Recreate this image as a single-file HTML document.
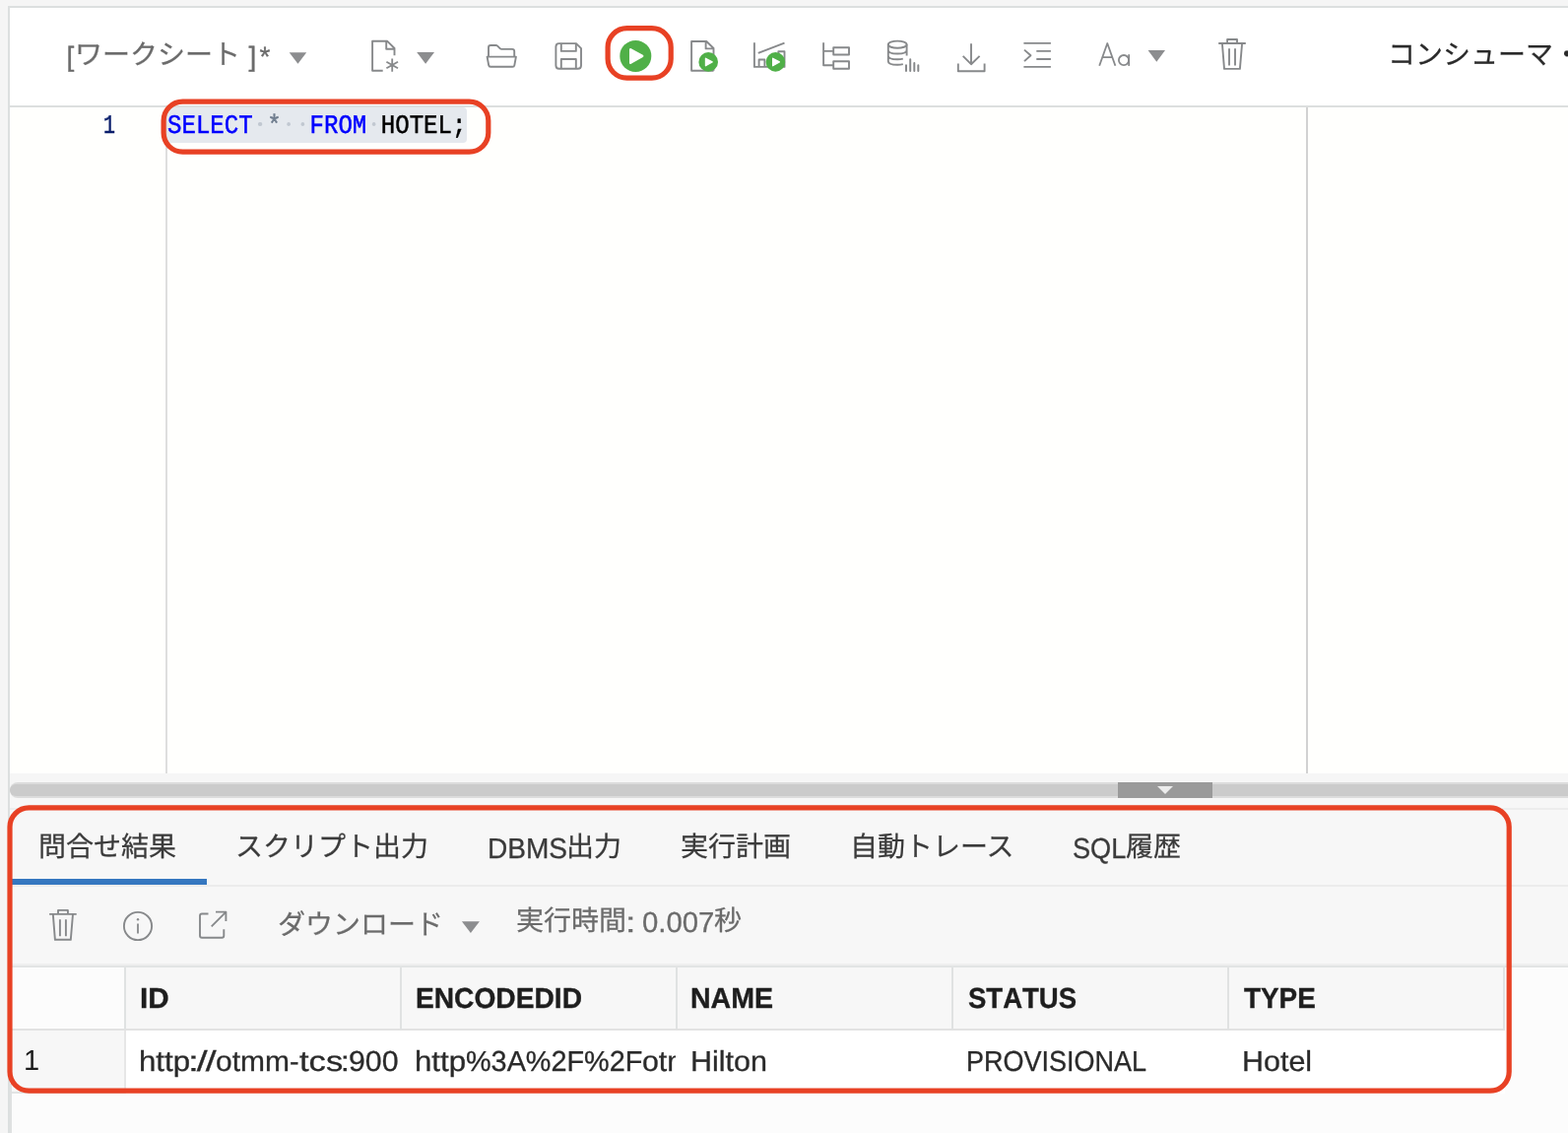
<!DOCTYPE html>
<html lang="ja"><head><meta charset="utf-8"><title>SQL Worksheet</title><style>
html,body{margin:0;padding:0;overflow:hidden}
body{text-rendering:geometricPrecision;width:1592px;height:1150px;position:relative;overflow:hidden;background:#f5f5f5;font-family:"Liberation Sans",sans-serif}
.b{position:absolute;box-sizing:border-box}
.t{position:absolute;white-space:pre;display:block}
.j{font:normal 28px/28px "Liberation Sans","Noto Sans CJK JP",sans-serif;-webkit-text-stroke:0.25px}
svg.i{position:absolute;overflow:visible}
#app{position:absolute;left:0;top:0;width:1592px;height:1150px;overflow:hidden;will-change:transform}
</style></head><body>
<div id="app">
<div class="b" style="left:10px;top:8px;width:1582px;height:99px;background:#ffffff;"></div>
<div class="b" style="left:8px;top:6px;width:1584px;height:2px;background:#dcdfdf;"></div>
<div class="b" style="left:8px;top:6px;width:2px;height:1144px;background:#dcdfdf;"></div>
<div class="b" style="left:10px;top:107px;width:1582px;height:2px;background:#dcdfdf;"></div>
<div class="b" style="left:10px;top:109px;width:1582px;height:676px;background:#fffffd;"></div>
<div class="b" style="left:168px;top:109px;width:2px;height:676px;background:#dedede;"></div>
<div class="b" style="left:1326px;top:109px;width:2px;height:676px;background:#d2d2d2;"></div>
<div class="b" style="left:10px;top:785px;width:1582px;height:25px;background:#f6f6f6;"></div>
<div class="b" style="left:10px;top:794px;width:1582px;height:16px;background:#dcdcdc;border-radius:8px 0 0 8px"></div>
<div class="b" style="left:10px;top:796px;width:1582px;height:12px;background:#cbcbcb;border-radius:6px 0 0 6px"></div>
<div class="b" style="left:1135px;top:794px;width:96px;height:16px;background:#9a9a9a;"></div>
<svg class="i" style="left:1175px;top:798px" width="16" height="8" viewBox="0 0 16 8"><path d="M0 0H16L8 8Z" fill="#ececec"/></svg>
<div class="b" style="left:10px;top:810px;width:1582px;height:172px;background:#f7f7f7;"></div>
<div class="b" style="left:10px;top:820px;width:1582px;height:2px;background:#ededed;"></div>
<div class="b" style="left:10px;top:898px;width:1582px;height:2px;background:#ececec;"></div>
<div class="b" style="left:10px;top:978px;width:1582px;height:2px;background:#efefef;"></div>
<div class="b" style="left:10px;top:980px;width:1582px;height:2px;background:#e2e4e4;"></div>
<div class="b" style="left:10px;top:982px;width:1582px;height:168px;background:#fcfcfc;"></div>
<div class="b" style="left:12px;top:982px;width:115px;height:63px;background:#fcfcfc;"></div>
<div class="b" style="left:127px;top:982px;width:1401px;height:63px;background:#f7f7f7;"></div>
<div class="b" style="left:12px;top:1046px;width:115px;height:62px;background:#f7f7f7;"></div>
<div class="b" style="left:127px;top:1046px;width:1401px;height:64px;background:#ffffff;"></div>
<div class="b" style="left:12px;top:1044px;width:1516px;height:2px;background:#e2e2e2;"></div>
<div class="b" style="left:126px;top:982px;width:2px;height:63px;background:#e0e2e2;"></div>
<div class="b" style="left:406px;top:982px;width:2px;height:63px;background:#e0e2e2;"></div>
<div class="b" style="left:686px;top:982px;width:2px;height:63px;background:#e0e2e2;"></div>
<div class="b" style="left:966px;top:982px;width:2px;height:63px;background:#e0e2e2;"></div>
<div class="b" style="left:1246px;top:982px;width:2px;height:63px;background:#e0e2e2;"></div>
<div class="b" style="left:1526px;top:982px;width:2px;height:63px;background:#e0e2e2;"></div>
<div class="b" style="left:126px;top:1046px;width:2px;height:64px;background:#e6e6e6;"></div>
<div class="b" style="left:12px;top:1108px;width:115px;height:2px;background:#e2e4e4;"></div>
<div class="b" style="left:10px;top:1100px;width:2px;height:50px;background:#dfe1e1;"></div>
<div class="b" style="left:12px;top:892px;width:198px;height:6px;background:#3577c0;"></div>
<span class="t" style="left:67.60px;top:41px;font:normal 28px/33.60px 'Liberation Sans',sans-serif;color:#6b6b6b;letter-spacing:0px;-webkit-text-stroke:0.35px;">[</span>
<span class="t j" style="left:76px;top:42px;color:#6b6b6b">ワークシート</span>
<span class="t" style="left:252.60px;top:41px;font:normal 28px/33.60px 'Liberation Sans',sans-serif;color:#6b6b6b;letter-spacing:0px;-webkit-text-stroke:0.35px;">]</span>
<span class="t" style="left:263.40px;top:41px;font:normal 28px/33.60px 'Liberation Sans',sans-serif;color:#6b6b6b;letter-spacing:0px;-webkit-text-stroke:0.35px;">*</span>
<span class="t j" style="left:1409px;top:42px;color:#2a2a2a">コンシューマ</span>
<span class="t j" style="left:1577px;top:42px;color:#2a2a2a">・</span>
<span class="t" style="left:105.20px;top:113px;font:normal 27px/32.40px 'Liberation Mono',monospace;color:#0b1f6b;letter-spacing:0px;transform:scaleX(0.74);transform-origin:0 0;-webkit-text-stroke:0.55px #0b1f6b;">1</span>
<div class="b" style="left:170px;top:109px;width:304px;height:36px;background:#e5e9ee;border-radius:0 4px 4px 0"></div>
<span class="t" style="left:169.80px;top:113px;font:normal 27px/32.40px 'Liberation Mono',monospace;color:#000;letter-spacing:0px;transform:scaleX(0.892);transform-origin:0 0;-webkit-text-stroke:0.5px;"><span style="color:#0000ff">SELECT</span><span style="display:inline-block;width:16.2px;height:1px;position:relative;vertical-align:baseline"><i style="position:absolute;left:5.9px;top:-10.2px;width:4.4px;height:4px;border-radius:50%;background:#c1c8d1"></i></span><span style="color:#6e7c8d;-webkit-text-stroke:0.4px #6e7c8d">*</span><span style="display:inline-block;width:16.2px;height:1px;position:relative;vertical-align:baseline"><i style="position:absolute;left:5.9px;top:-10.2px;width:4.4px;height:4px;border-radius:50%;background:#c1c8d1"></i></span><span style="display:inline-block;width:16.2px;height:1px;position:relative;vertical-align:baseline"><i style="position:absolute;left:5.9px;top:-10.2px;width:4.4px;height:4px;border-radius:50%;background:#c1c8d1"></i></span><span style="color:#0000ff">FROM</span><span style="display:inline-block;width:16.2px;height:1px;position:relative;vertical-align:baseline"><i style="position:absolute;left:5.9px;top:-10.2px;width:4.4px;height:4px;border-radius:50%;background:#c1c8d1"></i></span><span style="color:#000">HOTEL;</span></span>
<span class="t j" style="left:39px;top:846px;color:#3a3a3a">問合せ結果</span>
<span class="t j" style="left:239px;top:846px;color:#3a3a3a">スクリプト出力</span>
<span class="t" style="left:495.30px;top:845px;font:normal 29px/34.80px 'Liberation Sans',sans-serif;color:#3a3a3a;letter-spacing:0.0px;transform:scaleX(0.9678);transform-origin:0 0;font-kerning:none;-webkit-text-stroke:0.3px;">DBMS</span>
<span class="t j" style="left:575px;top:846px;color:#3a3a3a">出力</span>
<span class="t j" style="left:691px;top:846px;color:#3a3a3a">実行計画</span>
<span class="t j" style="left:863px;top:846px;color:#3a3a3a">自動トレース</span>
<span class="t" style="left:1088.57px;top:845px;font:normal 29px/34.80px 'Liberation Sans',sans-serif;color:#3a3a3a;letter-spacing:0.0px;transform:scaleX(0.9363);transform-origin:0 0;font-kerning:none;-webkit-text-stroke:0.3px;">SQL</span>
<span class="t j" style="left:1143px;top:846px;color:#3a3a3a">履歴</span>
<span class="t j" style="left:282px;top:925px;color:#6b6b6b">ダウンロード</span>
<span class="t j" style="left:524px;top:921px;color:#6b6b6b">実行時間</span>
<span class="t" style="left:634.95px;top:920px;font:normal 29px/34.80px 'Liberation Sans',sans-serif;color:#6b6b6b;letter-spacing:0.0px;transform:scaleX(1.3038);transform-origin:0 0;font-kerning:none;-webkit-text-stroke:0.3px;">:</span>
<span class="t" style="left:651.86px;top:920px;font:normal 29px/34.80px 'Liberation Sans',sans-serif;color:#6b6b6b;letter-spacing:0.0px;transform:scaleX(1.0103);transform-origin:0 0;font-kerning:none;-webkit-text-stroke:0.3px;">0.007</span>
<span class="t j" style="left:725px;top:921px;color:#6b6b6b">秒</span>
<span class="t" style="left:141.92px;top:997px;font:bold 29px/34.80px 'Liberation Sans',sans-serif;color:#1e1e1e;letter-spacing:0.0px;transform:scaleX(1.0216);transform-origin:0 0;font-kerning:none;-webkit-text-stroke:0.35px;">ID</span>
<span class="t" style="left:421.52px;top:997px;font:bold 29px/34.80px 'Liberation Sans',sans-serif;color:#1e1e1e;letter-spacing:0.0px;transform:scaleX(0.971);transform-origin:0 0;font-kerning:none;-webkit-text-stroke:0.35px;">ENCODEDID</span>
<span class="t" style="left:701.49px;top:997px;font:bold 29px/34.80px 'Liberation Sans',sans-serif;color:#1e1e1e;letter-spacing:0.0px;transform:scaleX(0.984);transform-origin:0 0;font-kerning:none;-webkit-text-stroke:0.35px;">NAME</span>
<span class="t" style="left:982.61px;top:997px;font:bold 29px/34.80px 'Liberation Sans',sans-serif;color:#1e1e1e;letter-spacing:0.0px;transform:scaleX(0.9489);transform-origin:0 0;font-kerning:none;-webkit-text-stroke:0.35px;">STATUS</span>
<span class="t" style="left:1262.79px;top:997px;font:bold 29px/34.80px 'Liberation Sans',sans-serif;color:#1e1e1e;letter-spacing:0.0px;transform:scaleX(0.9612);transform-origin:0 0;font-kerning:none;-webkit-text-stroke:0.35px;">TYPE</span>
<span class="t" style="left:24px;top:1062px;font:29px/30px 'Liberation Sans',sans-serif;color:#1c1c1c">1</span>
<div class="b" style="left:127px;top:1046px;width:279px;height:58px;overflow:hidden"><span class="t" style="left:14.44px;top:15px;font:normal 29px/34.80px 'Liberation Sans',sans-serif;color:#2a2a2a;letter-spacing:0.0px;transform:scaleX(1.0766);transform-origin:0 0;font-kerning:none;-webkit-text-stroke:0.3px;">http</span><span class="t" style="left:64.43px;top:15px;font:normal 29px/34.80px 'Liberation Sans',sans-serif;color:#2a2a2a;letter-spacing:-1.5px;transform:scaleX(1.3496);transform-origin:0 0;font-kerning:none;-webkit-text-stroke:0.3px;">://</span><span class="t" style="left:92.14px;top:15px;font:normal 29px/34.80px 'Liberation Sans',sans-serif;color:#2a2a2a;letter-spacing:0.0px;transform:scaleX(1.0321);transform-origin:0 0;font-kerning:none;-webkit-text-stroke:0.3px;">otmm</span><span class="t" style="left:166.93px;top:15px;font:normal 29px/34.80px 'Liberation Sans',sans-serif;color:#2a2a2a;letter-spacing:0.0px;transform:scaleX(0.9887);transform-origin:0 0;font-kerning:none;-webkit-text-stroke:0.3px;">-</span><span class="t" style="left:176.78px;top:15px;font:normal 29px/34.80px 'Liberation Sans',sans-serif;color:#2a2a2a;letter-spacing:0.0px;transform:scaleX(1.192);transform-origin:0 0;font-kerning:none;-webkit-text-stroke:0.3px;">tcs</span><span class="t" style="left:218.72px;top:15px;font:normal 29px/34.80px 'Liberation Sans',sans-serif;color:#2a2a2a;letter-spacing:0.0px;transform:scaleX(1.0865);transform-origin:0 0;font-kerning:none;-webkit-text-stroke:0.3px;">:</span><span class="t" style="left:226.78px;top:15px;font:normal 29px/34.80px 'Liberation Sans',sans-serif;color:#2a2a2a;letter-spacing:0.0px;transform:scaleX(1.0459);transform-origin:0 0;font-kerning:none;-webkit-text-stroke:0.3px;">900</span></div>
<div class="b" style="left:407px;top:1046px;width:278.6px;height:58px;overflow:hidden"><span class="t" style="left:14.44px;top:15px;font:normal 29px/34.80px 'Liberation Sans',sans-serif;color:#2a2a2a;letter-spacing:0.0px;transform:scaleX(1.0766);transform-origin:0 0;font-kerning:none;-webkit-text-stroke:0.3px;">http</span><span class="t" style="left:65.97px;top:15px;font:normal 29px/34.80px 'Liberation Sans',sans-serif;color:#2a2a2a;letter-spacing:0.0px;transform:scaleX(0.9937);transform-origin:0 0;font-kerning:none;-webkit-text-stroke:0.3px;">%3A%2F%2F</span><span class="t" style="left:244.80px;top:15px;font:normal 29px/34.80px 'Liberation Sans',sans-serif;color:#2a2a2a;letter-spacing:0px;transform:scaleX(1.045);transform-origin:0 0;font-kerning:none;-webkit-text-stroke:0.3px;">otmm-tcs</span></div>
<span class="t" style="left:700.90px;top:1061px;font:normal 29px/34.80px 'Liberation Sans',sans-serif;color:#2a2a2a;letter-spacing:0.0px;transform:scaleX(1.0518);transform-origin:0 0;font-kerning:none;-webkit-text-stroke:0.3px;">Hilton</span>
<span class="t" style="left:981.19px;top:1061px;font:normal 29px/34.80px 'Liberation Sans',sans-serif;color:#2a2a2a;letter-spacing:0.0px;transform:scaleX(0.9303);transform-origin:0 0;font-kerning:none;-webkit-text-stroke:0.3px;">PROVISIONAL</span>
<span class="t" style="left:1260.60px;top:1061px;font:normal 29px/34.80px 'Liberation Sans',sans-serif;color:#2a2a2a;letter-spacing:0.0px;transform:scaleX(1.0508);transform-origin:0 0;font-kerning:none;-webkit-text-stroke:0.3px;">Hotel</span>
<svg class="i" style="left:0;top:0" width="1592" height="1150" viewBox="0 0 1592 1150"><path d="M293.7 53.2H311.2L302.45 64.8Z" fill="#8c8d8f"/><path d="M468.9 935.2H486.9L477.90 947.1Z" fill="#8c8d8f"/><rect x="617.10" y="28.70" width="64.10" height="50.50" rx="19.40" ry="19.40" fill="none" stroke="#e84124" stroke-width="5.2"/><rect x="166.10" y="103.10" width="329.70" height="51.10" rx="19.40" ry="19.40" fill="none" stroke="#e84124" stroke-width="5.2"/><rect x="10.00" y="819.90" width="1522.20" height="287.30" rx="19.40" ry="19.40" fill="none" stroke="#e84124" stroke-width="5.2"/></svg>
<!-- toolbar icons -->
<svg class="i" style="left:0;top:0" width="1592" height="110" viewBox="0 0 1592 110" fill="none" stroke="#87898b" stroke-width="1.9" stroke-linejoin="round" stroke-linecap="butt">
<!-- new file -->
<path d="M388.7 71.8H378.1V41.8H393.3L400.5 49V56.3M392.2 41.8V49.8H400.5"/>
<path d="M398.2 59.4V72.7M392.4 62.7L404 69.3M404 62.7L392.4 69.3" stroke-width="1.8"/>
<path d="M423.2 53H441L432.1 64.8Z" fill="#8c8d8f" stroke="none"/>
<!-- folder -->
<path d="M496 57V48.2Q496 46 498.2 46H503.4Q504.4 46 505.1 46.7L507.6 49.2Q508.3 49.9 509.3 49.9H520Q522.2 49.9 522.2 52.1V57"/>
<path d="M494.6 57.6H523.9L522.3 66.3Q522 67.8 520.4 67.8H498.1Q496.500 67.8 496.2 66.3Z"/>
<!-- save -->
<path d="M567.7 44.1H585L590 49.1V66.4Q590 69.7 586.7 69.7H567.7Q564.4 69.7 564.4 66.4V47.4Q564.4 44.1 567.7 44.1Z"/>
<path d="M569.8 44.100V51.9H584.8V44.100M569.8 69.7V60H584.8V69.7"/>
<!-- run (play) -->
<circle cx="645.3" cy="56.9" r="16" fill="#50b048" stroke="none"/>
<path d="M640.2 50.2L652.2 56.9L640.2 63.8Z" fill="#fff" stroke="#fff" stroke-width="2.4"/>
<!-- run script -->
<path d="M724.5 71.8H702.1V42H717.3L724.5 49V71.8M716.6 42V49.4H724.5"/>
<circle cx="719.2" cy="62.9" r="9.8" fill="#50b048" stroke="none"/>
<path d="M716.4 59.2L723.2 62.9L716.4 66.8Z" fill="#fff" stroke="#fff" stroke-width="1.2"/>
<!-- explain plan -->
<path d="M765.9 43.2V67.9H796.5V52.2H790.3V67.9M770.6 67.9V60.5H776.4V67.9M769.8 53.8L796.500 43.6"/>
<circle cx="787.4" cy="62.9" r="9.8" fill="#50b048" stroke="none"/>
<path d="M784.6 59.2L791.4 62.9L784.6 66.8Z" fill="#fff" stroke="#fff" stroke-width="1.2"/>
<!-- autotrace tree -->
<path d="M836.1 43.2V66.3H846.2M836.1 51.9H846.2M846.2 48.2H862V55.5H846.2ZM846.2 62.2H862V69.7H846.2Z"/>
<!-- db -->
<ellipse cx="911.2" cy="45.2" rx="9.400" ry="3.6"/>
<path d="M901.8 45.2V62.300Q901.8 65.8 911.2 65.8Q914.5 65.8 916.8 65.2M920.6 45.2V56.5M901.8 51Q901.8 54.5 911.2 54.5Q920.6 54.5 920.6 51M901.8 56.700Q901.8 60.2 911.2 60.2Q914.5 60.2 916.8 59.6"/>
<path d="M920 66.2V72M924.2 60.2V72M928.3 64V72M932.3 66.2V72" stroke-width="2" stroke-linecap="round"/>
<!-- download -->
<path d="M986 44.300V65M977.7 56.9L986 65.2L994.6 56.9M972.8 64.400V72.200H999.6V64.400"/>
<!-- format -->
<path d="M1039.400 43.9H1066.9M1052.3 51.9H1066.9M1052.3 60H1066.9M1039.400 67.9H1066.9M1040 50.6L1046.500 56.2L1040 62.1"/>
<!-- Aa -->
<path d="M1116.2 66.8L1124.3 44L1132.4 66.8M1119.4 58.1H1129.2" stroke-width="1.8"/>
<circle cx="1141" cy="61.1" r="5.1" stroke-width="1.8"/>
<path d="M1146.2 55.2V66.9" stroke-width="1.8"/>
<path d="M1165.6 51.1H1183L1174.3 62.8Z" fill="#8c8d8f" stroke="none"/>
<!-- trash -->
<path d="M1237.2 44.0H1264.8M1246.1 44.0V40.0H1256.0V44.0M1240.9 44.0L1243.0 69.9H1258.9L1261.1 44.0M1248.0 49.3V66.4M1254.0 49.3V66.4" stroke-width="1.9"/>
</svg>
<!-- result toolbar icons -->
<svg class="i" style="left:0;top:900px" width="400" height="80" viewBox="0 900 400 80" fill="none" stroke="#87898b" stroke-width="1.9" stroke-linejoin="round">
<path d="M50.1 927.9H77.7M59.0 927.9V923.9H68.9V927.9M53.8 927.9L55.9 953.8H71.8L74.0 927.9M60.9 933.2V950.3M66.9 933.2V950.3" stroke-width="1.9"/>
<circle cx="140" cy="940" r="14.1"/>
<path d="M140 937.5V947.5" stroke-width="1.8"/><circle cx="140" cy="933.3" r="1.200" fill="#8c8d8f" stroke="none"/>
<path d="M211.5 927.5H205Q203 927.5 203 929.5V949.8Q203 951.8 205 951.8H225.3Q227.3 951.8 227.3 949.8V943.3M219 925.6H229.4V935M229.2 925.8L214.7 940.3"/>
</svg>

</div>
</body></html>
